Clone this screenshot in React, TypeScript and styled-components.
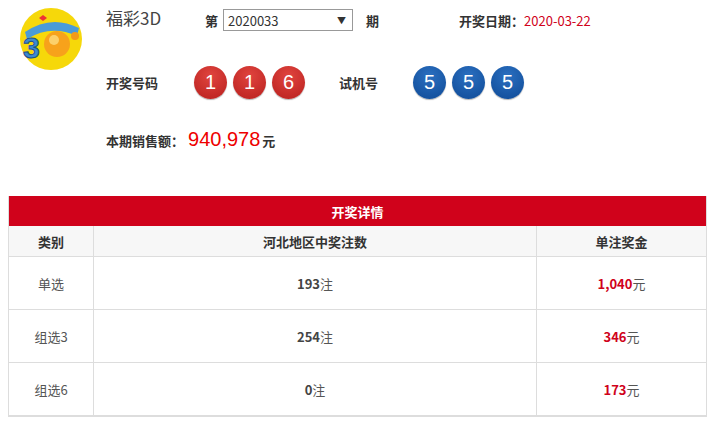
import React from "react";
import styled, { createGlobalStyle } from "styled-components";

const G = createGlobalStyle`
  body { margin: 0; font-family: "Microsoft YaHei", "Noto Sans CJK SC", "Liberation Sans", sans-serif; color: #333; background: #fff; }
`;
const Page = styled.div`width: 715px; height: 421px; overflow: hidden; position: relative;`;
const Top = styled.div`display: flex; height: 190px;`;
const Logo = styled.div`width: 106px; padding: 6px 0 0 17px; box-sizing: border-box;`;
const Info = styled.div`flex: 1; display: flex; flex-direction: column;`;
const Row1 = styled.div`display: flex; align-items: center; height: 36px; margin-top: 2px;`;
const Title = styled.div`font-size: 17px; color: #444; width: 99px; margin-top: -6px;`;
const Label = styled.span`font-size: 13px; font-weight: bold; color: #333;`;
const Select = styled.div`
  width: 130px; height: 22px; border: 1px solid #999; box-sizing: border-box; margin: 0 13px 0 5px;
  display: flex; align-items: center; justify-content: space-between; padding: 0 6px 0 4px;
  font-size: 13px; color: #333;
`;
const DateVal = styled.span`font-size: 13px; color: #d0021b;`;
const Row2 = styled.div`display: flex; align-items: center; margin-top: 26px; height: 36px;`;
const Balls = styled.div`display: flex; gap: 6px;`;
const Ball = styled.div<{ $blue?: boolean }>`
  width: 33px; height: 33px; border-radius: 50%;
  background: ${p => p.$blue ? "radial-gradient(circle at 50% 30%, #2a6fc0, #0f4a96)" : "radial-gradient(circle at 50% 30%, #e0443e, #b8201e)"};
  color: #fff; font-size: 20px; font-family: "Liberation Sans", sans-serif;
  display: flex; align-items: center; justify-content: center; box-shadow: 0 1px 1px rgba(0,0,0,.3);
`;
const Row3 = styled.div`display: flex; align-items: baseline; margin-top: 28px;`;
const Money = styled.span`font-size: 20px; color: #e00; margin: 0 2px 0 4px; font-family: "Liberation Sans", sans-serif;`;
const Yuan = styled.span`font-size: 13px; font-weight: bold;`;

const Table = styled.div`
  margin: 6px 8px 0 8px; border: 1px solid #ddd; border-top: none;
  display: grid; grid-template-columns: 85px 443px 1fr;
`;
const Head = styled.div`
  grid-column: 1 / 4; background: #d0021b; color: #fff; height: 30px;
  display: flex; align-items: center; justify-content: center; font-size: 13px; font-weight: bold;
`;
const Cell = styled.div<{ $h?: number; $head?: boolean; $last?: boolean }>`
  height: ${p => p.$h ?? 53}px; display: flex; align-items: center; justify-content: center;
  font-size: 13px; color: #555; box-sizing: border-box;
  border-bottom: 1px solid #ddd; border-right: ${p => p.$last ? "none" : "1px solid #ddd"};
  background: ${p => p.$head ? "#f7f7f7" : "#fff"};
  font-weight: ${p => p.$head ? "bold" : "normal"};
  ${p => p.$head ? "color:#333;" : ""}
`;
const Num = styled.b`color: #444;`;
const Red = styled.b`color: #d0021b;`;

const rows = [["单选", "193", "1,040"], ["组选3", "254", "346"], ["组选6", "0", "173"]];

export default function App() {
  return (
    <Page>
      <G />
      <Top>
        <Logo>
          <svg width="68" height="66" viewBox="0 0 68 66">
            <circle cx="34" cy="33" r="31" fill="#f6d80a" />
            <path d="M8 26 Q34 8 62 22 L60 30 Q34 18 10 33 Z" fill="#4a9bd8" />
            <circle cx="58" cy="30" r="4" fill="#f39a1a" />
            <circle cx="40" cy="38" r="13" fill="#f7a21b" />
            <circle cx="37" cy="34" r="5" fill="#fcd06a" />
            <text x="6" y="52" fontSize="30" fontWeight="bold" fill="#3c8ad0" stroke="#1d4f88" strokeWidth="1" fontFamily="Liberation Sans">3</text>
            <path d="M22 12 l4 -3 l4 3 l-4 3 z" fill="#e33" />
          </svg>
        </Logo>
        <Info>
          <Row1>
            <Title>福彩3D</Title>
            <Label>第</Label>
            <Select><span>2020033</span><span style={{ fontSize: 9 }}>▼</span></Select>
            <Label>期</Label>
            <Label style={{ marginLeft: 80 }}>开奖日期：</Label>
            <DateVal>2020-03-22</DateVal>
          </Row1>
          <Row2>
            <Label style={{ width: 88 }}>开奖号码</Label>
            <Balls>{["1", "1", "6"].map((n, i) => <Ball key={i}>{n}</Ball>)}</Balls>
            <Label style={{ marginLeft: 34, width: 74 }}>试机号</Label>
            <Balls>{["5", "5", "5"].map((n, i) => <Ball $blue key={i}>{n}</Ball>)}</Balls>
          </Row2>
          <Row3>
            <Label>本期销售额：</Label>
            <Money>940,978</Money>
            <Yuan>元</Yuan>
          </Row3>
        </Info>
      </Top>
      <Table>
        <Head>开奖详情</Head>
        <Cell $h={31} $head>类别</Cell>
        <Cell $h={31} $head>河北地区中奖注数</Cell>
        <Cell $h={31} $head $last>单注奖金</Cell>
        {rows.map(r => (
          <React.Fragment key={r[0]}>
            <Cell>{r[0]}</Cell>
            <Cell><Num>{r[1]}</Num>注</Cell>
            <Cell $last><Red>{r[2]}</Red>元</Cell>
          </React.Fragment>
        ))}
      </Table>
    </Page>
  );
}
